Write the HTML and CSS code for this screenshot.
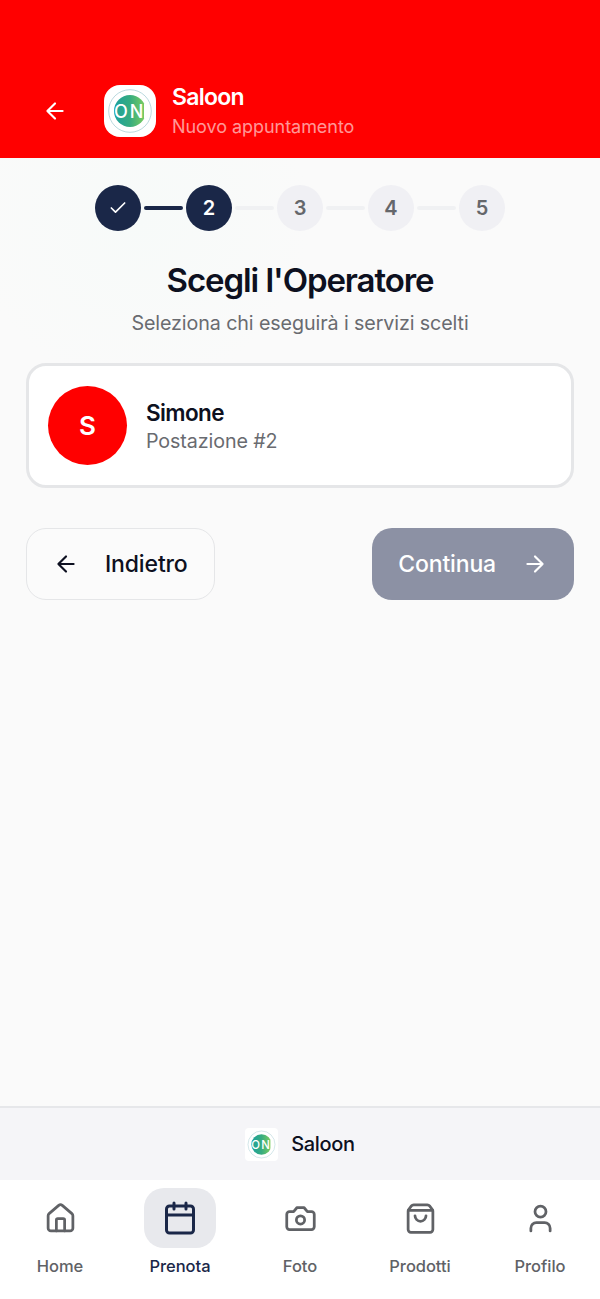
FILE: index.html
```
<!DOCTYPE html>
<html lang="it">

<head>
  <meta charset="UTF-8" />
  <meta name="viewport" content="width=device-width, initial-scale=1.0" />
  <title>Saloon - Nuovo appuntamento</title>
  <link rel="stylesheet" href="styles.css">
</head>

<body>
  <svg width="0" height="0" class="defs">
    <defs>
      <linearGradient id="logo-fill" x1="0" y1="0" x2="1" y2="0">
        <stop offset="0" stop-color="#1ca09d" />
        <stop offset="0.5" stop-color="#36ac80" />
        <stop offset="1" stop-color="#80cf5c" />
      </linearGradient>
      <symbol id="logo" viewBox="0 0 52 52">
        <circle cx="26" cy="26" r="21.3" fill="none" stroke="#a9cfd5" stroke-width="0.8" />
        <circle cx="26" cy="26" r="16" fill="url(#logo-fill)" />
        <path d="M40 19h3v14h-3z" fill="#fff" />
        <text x="10" y="32.500" class="logo-text">ON</text>
      </symbol>
    </defs>
  </svg>

  <header class="header">
    <svg class="icon back" viewBox="0 0 24 24"><path d="m12 19-7-7 7-7M19 12H5" /></svg>
    <div class="logo"><svg viewBox="0 0 52 52"><use href="#logo" /></svg></div>
    <div class="header-text">
      <div class="header-title">Saloon</div>
      <div class="header-subtitle">Nuovo appuntamento</div>
    </div>
  </header>

  <main class="main">
    <div class="steps">
      <div class="step active"><svg class="icon check" viewBox="0 0 24 24"><path d="M20 6 9 17l-5-5" /></svg></div>
      <div class="line done"></div>
      <div class="step active">2</div>
      <div class="line"></div>
      <div class="step">3</div>
      <div class="line"></div>
      <div class="step">4</div>
      <div class="line"></div>
      <div class="step">5</div>
    </div>

    <h1 class="title">Scegli l'Operatore</h1>
    <p class="subtitle">Seleziona chi eseguirà i servizi scelti</p>

    <div class="card">
      <div class="avatar">S</div>
      <div class="card-text">
        <div class="name">Simone</div>
        <div class="seat">Postazione #2</div>
      </div>
    </div>

    <div class="actions">
      <button class="button outline">
        <svg class="icon" viewBox="0 0 24 24"><path d="m12 19-7-7 7-7M19 12H5" /></svg>
        <span>Indietro</span>
      </button>
      <button class="button primary" disabled>
        <span>Continua</span>
        <svg class="icon" viewBox="0 0 24 24"><path d="m12 5 7 7-7 7M5 12h14" /></svg>
      </button>
    </div>
  </main>

  <footer class="brand">
    <div class="logo small"><svg viewBox="0 0 52 52"><use href="#logo" /></svg></div>
    <span>Saloon</span>
  </footer>

  <nav class="nav">
    <a class="nav-item">
      <span class="nav-icon">
        <svg class="icon" viewBox="0 0 24 24">
          <path d="M15 21v-8a1 1 0 0 0-1-1h-4a1 1 0 0 0-1 1v8" />
          <path d="M3 10a2 2 0 0 1 .709-1.528l7-6a2 2 0 0 1 2.582 0l7 6A2 2 0 0 1 21 10v9a2 2 0 0 1-2 2H5a2 2 0 0 1-2-2z" />
        </svg>
      </span>
      <span>Home</span>
    </a>
    <a class="nav-item current">
      <span class="nav-icon">
        <svg class="icon" viewBox="0 0 24 24">
          <path d="M8 2v4M16 2v4M3 10h18" />
          <rect x="3" y="4" width="18" height="18" rx="2" />
        </svg>
      </span>
      <span>Prenota</span>
    </a>
    <a class="nav-item">
      <span class="nav-icon">
        <svg class="icon" viewBox="0 0 24 24">
          <path d="M14.500 4h-5L7 7H4a2 2 0 0 0-2 2v9a2 2 0 0 0 2 2h16a2 2 0 0 0 2-2V9a2 2 0 0 0-2-2h-3l-2.500-3z" />
          <circle cx="12" cy="13" r="3" />
        </svg>
      </span>
      <span>Foto</span>
    </a>
    <a class="nav-item">
      <span class="nav-icon">
        <svg class="icon" viewBox="0 0 24 24">
          <path d="M16 10a4 4 0 0 1-8 0M3.103 6.034h17.794" />
          <path d="M3.400 5.467a2 2 0 0 0-.4 1.200V20a2 2 0 0 0 2 2h14a2 2 0 0 0 2-2V6.667a2 2 0 0 0-.4-1.200l-2-2.667A2 2 0 0 0 17 2H7a2 2 0 0 0-1.600.8z" />
        </svg>
      </span>
      <span>Prodotti</span>
    </a>
    <a class="nav-item">
      <span class="nav-icon">
        <svg class="icon" viewBox="0 0 24 24">
          <path d="M19 21v-2a4 4 0 0 0-4-4H9a4 4 0 0 0-4 4v2" />
          <circle cx="12" cy="7" r="4" />
        </svg>
      </span>
      <span>Profilo</span>
    </a>
  </nav>
</body>

</html>
```

FILE: styles.css
```
* {
  box-sizing: border-box;
}

body {
  margin: 0;
  height: 1299px;
  display: flex;
  flex-direction: column;
  background: #fafafa;
  color: #0d1020;
  font-family: Inter, "Liberation Sans", sans-serif;
}

.defs {
  position: absolute;
}

.icon {
  width: 26px;
  height: 26px;
  flex: none;
  fill: none;
  stroke: currentColor;
  stroke-width: 2;
  stroke-linecap: round;
  stroke-linejoin: round;
}

.header {
  height: 158px;
  padding: 63px 0 0 42px;
  display: flex;
  align-items: center;
  background: #f00;
  color: #fff;
}

.logo {
  width: 52px;
  height: 52px;
  margin-left: 36px;
  border-radius: 16px;
  background: #fff;
  flex: none;
}

.logo svg {
  display: block;
  width: 100%;
  height: 100%;
}

.logo-text {
  font-size: 18px;
  font-weight: 500;
  letter-spacing: 2px;
  fill: #fff;
}

.header-text {
  margin-left: 16px;
  padding-top: 2px;
}

.header-title {
  font-size: 23px;
  font-weight: 600;
  line-height: 29px;
  letter-spacing: -0.75px;
}

.header-subtitle {
  font-size: 18px;
  line-height: 29px;
  letter-spacing: -0.05px;
  color: rgba(255, 255, 255, 0.6);
}

.main {
  flex: 1;
  padding: 27px 26px 0;
  background: radial-gradient(circle at 140px 60px, #f7faf9 0, #fafafa 170px);
}

.steps {
  display: flex;
  align-items: center;
  justify-content: center;
  gap: 3px;
}

.step {
  width: 46px;
  height: 46px;
  border-radius: 50%;
  display: flex;
  align-items: center;
  justify-content: center;
  background: #f0f0f4;
  color: #65676b;
  font-size: 20px;
  font-weight: 600;
}

.step.active {
  background: #1a2748;
  color: #fff;
}

.check {
  width: 20px;
  height: 20px;
}

.line {
  width: 39px;
  height: 4px;
  border-radius: 2px;
  background: #f0f1f3;
}

.line.done {
  background: #1a2748;
}

.title {
  margin: 28px 0 0;
  text-align: center;
  font-size: 33px;
  font-weight: 600;
  line-height: 42px;
  letter-spacing: -1.080px;
}

.subtitle {
  margin: 7px 0 0;
  text-align: center;
  font-size: 19.700px;
  line-height: 30px;
  letter-spacing: -0.1px;
  color: #696b70;
}

.card {
  height: 125px;
  margin-top: 25px;
  padding-left: 19px;
  display: flex;
  align-items: center;
  gap: 19px;
  border: 3px solid #e5e6e8;
  border-radius: 20px;
  background: #fff;
}

.card-text {
  padding-top: 2px;
}

.avatar {
  width: 79px;
  height: 79px;
  border-radius: 50%;
  display: flex;
  align-items: center;
  justify-content: center;
  background: #f00;
  color: #fff;
  font-size: 26px;
  font-weight: 600;
}

.name {
  font-size: 22.500px;
  font-weight: 600;
  line-height: 29px;
  letter-spacing: -0.6px;
}

.seat {
  font-size: 19.700px;
  line-height: 29px;
  letter-spacing: -0.1px;
  color: #696b70;
}

.actions {
  margin-top: 40px;
  display: flex;
  justify-content: space-between;
}

.button {
  height: 72px;
  padding: 0 26px;
  display: flex;
  align-items: center;
  gap: 26px;
  border: 0;
  border-radius: 20px;
  font: 500 23px Inter, "Liberation Sans", sans-serif;
  letter-spacing: -0.15px;
}

.outline {
  border: 1.5px solid #e5e6e8;
  background: #fbfbfb;
  color: #0d1020;
}

.primary {
  background: #8c91a4;
  color: #fff;
}

.brand {
  height: 74px;
  display: flex;
  align-items: center;
  justify-content: center;
  gap: 13px;
  border-top: 2px solid #e6e7ea;
  background: #f5f5f8;
  font-size: 20px;
  font-weight: 500;
  letter-spacing: -0.3px;
}

.logo.small {
  width: 33px;
  height: 33px;
  margin-left: 0;
  border-radius: 4px;
}

.nav {
  height: 119px;
  padding-top: 8px;
  display: flex;
  background: #fff;
}

.nav-item {
  flex: 1;
  display: flex;
  flex-direction: column;
  align-items: center;
  gap: 7px;
  color: #606266;
  font-size: 16.500px;
  font-weight: 500;
  line-height: 23px;
  letter-spacing: -0.05px;
}

.nav-icon {
  width: 72px;
  height: 60px;
  border-radius: 20px;
  display: flex;
  align-items: center;
  justify-content: center;
}

.nav-icon .icon {
  width: 33px;
  height: 33px;
}

.current {
  color: #1a2748;
}

.current .nav-icon {
  background: #e8e9ed;
}

.current .nav-icon .icon {
  width: 36px;
  height: 36px;
}
```
